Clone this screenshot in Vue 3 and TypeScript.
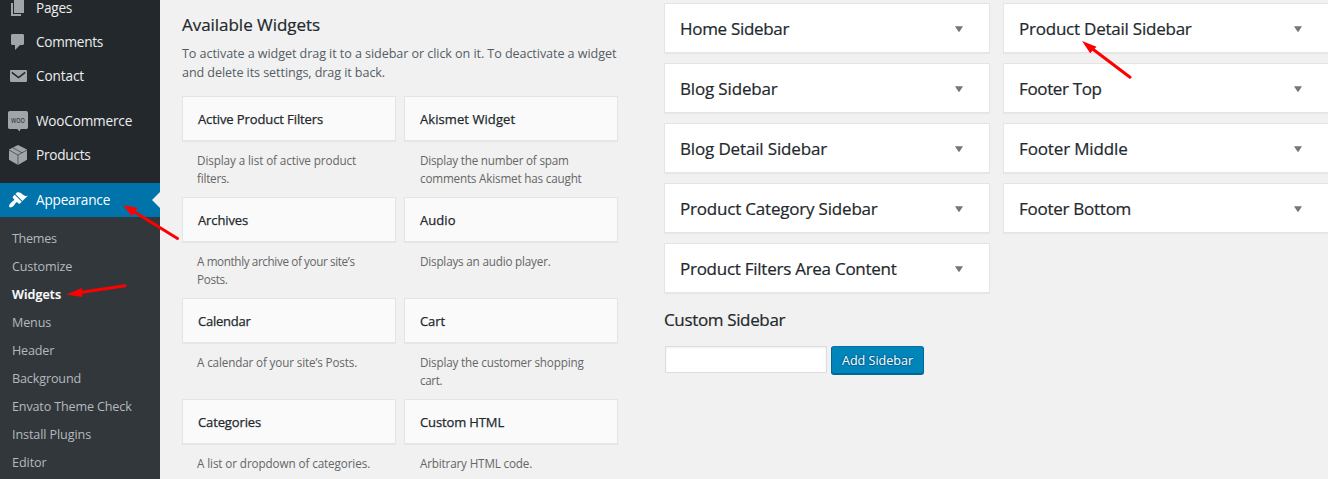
<script setup lang="ts">
interface Label { text: string; w: number }
interface MenuItem extends Label { icon: string; gap?: boolean; active?: boolean }
interface Widget { title: Label; lines: Label[] }

const t = (text: string, w: number): Label => ({ text, w })

// Tightens or loosens tracking so a label occupies its given width.
const vFit = {
  mounted(el: HTMLElement, binding: { value: number }) {
    const apply = () => {
      el.style.letterSpacing = '0px'
      const n = (el.textContent ?? '').length
      el.style.letterSpacing = `${(binding.value - 0.4 - el.getBoundingClientRect().width) / n}px`
    }
    apply()
    document.fonts.ready.then(apply)
  },
}

const menu: MenuItem[] = [
  { text: 'Pages', w: 36.5, icon: 'pages' },
  { text: 'Comments', w: 67.5, icon: 'comments' },
  { text: 'Contact', w: 48.5, icon: 'mail' },
  { text: 'WooCommerce', w: 96.5, icon: 'woo', gap: true },
  { text: 'Products', w: 55, icon: 'box' },
  { text: 'Appearance', w: 74.5, icon: 'brush', gap: true, active: true },
]
const submenu: Label[] = [
  t('Themes', 45), t('Customize', 60.5), t('Widgets', 49.5), t('Menus', 39.5), t('Header', 42.5),
  t('Background', 69.5), t('Envato Theme Check', 120), t('Install Plugins', 79.5), t('Editor', 35),
]
const intro: Label[] = [
  t('To activate a widget drag it to a sidebar or click on it. To deactivate a widget', 434.7),
  t('and delete its settings, drag it back.', 203.5),
]
const widgets: Widget[] = [
  { title: t('Active Product Filters', 125.5), lines: [t('Display a list of active product', 159.5), t('filters.', 32.5)] },
  { title: t('Akismet Widget', 95.5), lines: [t('Display the number of spam', 149), t('comments Akismet has caught', 162)] },
  { title: t('Archives', 50.5), lines: [t('A monthly archive of your site’s', 158), t('Posts.', 31)] },
  { title: t('Audio', 36), lines: [t('Displays an audio player.', 131)] },
  { title: t('Calendar', 53), lines: [t('A calendar of your site’s Posts.', 160.5)] },
  { title: t('Cart', 25.5), lines: [t('Display the customer shopping', 164), t('cart.', 22.5)] },
  { title: t('Categories', 63.5), lines: [t('A list or dropdown of categories.', 173.5)] },
  { title: t('Custom HTML', 84.5), lines: [t('Arbitrary HTML code.', 112.5)] },
]
const areas: Label[][] = [
  [t('Home Sidebar', 109.5), t('Blog Sidebar', 98), t('Blog Detail Sidebar', 147.5), t('Product Category Sidebar', 198), t('Product Filters Area Content', 217)],
  [t('Product Detail Sidebar', 173), t('Footer Top', 83), t('Footer Middle', 109), t('Footer Bottom', 112.5)],
]
</script>

<template>
  <div class="page">
    <nav class="side">
      <a v-for="m in menu" :key="m.text" class="item" :class="{ gap: m.gap, active: m.active }">
        <svg class="icon" viewBox="0 0 20 20">
          <path v-if="m.icon === 'pages'" d="M6 15V2h10v13H6zm-1 1h8v2H3V5h2v11z" />
          <path v-else-if="m.icon === 'comments'" d="M4.500 2h10c.8 0 1.500.7 1.500 1.500v8c0 .8-.7 1.500-1.500 1.500H12l-5 5v-5H4.500C3.700 13 3 12.300 3 11.500v-8C3 2.700 3.700 2 4.500 2z" />
          <template v-else-if="m.icon === 'mail'">
            <rect x="2" y="4" width="17" height="12" rx="1.200" />
            <path class="cut" d="M3.800 6.300l6.700 5.300 6.700-5.300" stroke-width="1.600" />
          </template>
          <template v-else-if="m.icon === 'woo'">
            <path d="M1.800 0h16.400C19.300 0 20 .8 20 1.800v14.400c0 1-.7 1.800-1.800 1.800h-5.600l-.9 2.500L9.200 18H1.800C.8 18 0 17.200 0 16.200V1.800C0 .8.8 0 1.800 0z" />
            <text x="10" y="11.600" text-anchor="middle" textLength="14" lengthAdjust="spacingAndGlyphs">WOO</text>
          </template>
          <template v-else-if="m.icon === 'box'">
            <path d="M10 0l9 4.600v10.200L10 20l-9-5.200V4.600z" />
            <path class="cut" d="M1 5l9 5 9-5M10 10v10M5 2.800l9 5" stroke-width=".6" />
          </template>
          <path v-else d="M14.480 11.060L7.410 3.990l1.500-1.500c.5-.56 2.300-.47 3.510.32 1.210.8 1.430 1.280 2.910 2.100 1.180.64 2.450 1.260 4.450.85zm-.71.71L6.700 4.700 4.930 6.470c-.39.39-.39 1.020 0 1.410l1.060 1.060c.39.39.39 1.030 0 1.420-.6.6-1.430 1.110-2.210 1.690-.35.26-.7.53-1.010.84C1.430 14.230.4 16.080 1.400 17.070c.99 1 2.840-.03 4.180-1.360.31-.31.58-.66.85-1.020.57-.78 1.080-1.610 1.690-2.210.39-.39 1.020-.39 1.410 0l1.060 1.060c.39.39 1.020.39 1.410 0z" />
        </svg>
        <span v-fit="m.w">{{ m.text }}</span>
      </a>
      <div class="sub">
        <a v-for="s in submenu" :key="s.text" :class="{ current: s.text === 'Widgets' }"><span v-fit="s.w">{{ s.text }}</span></a>
      </div>
    </nav>

    <section class="available">
      <h2><span v-fit="138.5">Available Widgets</span></h2>
      <p v-for="l in intro" :key="l.text" class="intro"><span v-fit="l.w">{{ l.text }}</span></p>
      <div class="grid">
        <div v-for="w in widgets" :key="w.title.text" class="widget">
          <h3><span v-fit="w.title.w">{{ w.title.text }}</span></h3>
          <p v-for="l in w.lines" :key="l.text"><span v-fit="l.w">{{ l.text }}</span></p>
        </div>
      </div>
    </section>

    <section class="areas">
      <div v-for="(col, i) in areas" :key="i" class="col">
        <div v-for="a in col" :key="a.text" class="area">
          <span v-fit="a.w">{{ a.text }}</span>
          <svg class="caret" viewBox="0 0 9 6"><path d="M0 0h9L5 6H4z" /></svg>
        </div>
        <template v-if="i === 0">
          <h2 class="custom"><span v-fit="121.5">Custom Sidebar</span></h2>
          <div class="form">
            <input type="text" />
            <button type="button"><span v-fit="71.5">Add Sidebar</span></button>
          </div>
        </template>
      </div>
    </section>

    <svg class="arrows" viewBox="0 0 1328 479">
      <path class="shaft" d="M133 211l44.500 27.500M80 292.500l45-6.800M1092 48.500l38 28.700" />
      <path d="M123.200 205.200l14.300 2.500-5.500 8.600zM66.500 294.600l15.200-6.700.6 9.200zM1082 41l14.500 5.700-6.300 6.500z" />
    </svg>
  </div>
</template>

<style>
html, body { overflow: hidden; }
</style>

<style scoped>
.page {
  position: relative;
  display: flex;
  width: 1328px;
  height: 479px;
  overflow: hidden;
  background: #f1f1f1;
  font-family: "Open Sans", "Noto Sans", sans-serif;
  color: #23282d;
}
.page span { white-space: nowrap; display: inline-block; }
h2, h3, p { margin: 0; }
.side { width: 160px; flex: none; background: #23282d; margin-top: -9px; height: 488px; }
.item {
  position: relative;
  display: flex;
  align-items: center;
  height: 34px;
  padding-left: 8px;
  gap: 8px;
  font-size: 13.6px;
  color: #eee;
}
.item span { margin-bottom: 2px; }
.item.gap { margin-top: 11px; }
.item.active { background: #0073aa; color: #fff; }
.item.active::after {
  content: "";
  position: absolute;
  right: 0;
  top: 9px;
  border: solid transparent;
  border-width: 8px 8px 8px 0;
  border-right-color: #f1f1f1;
}
.icon { width: 20px; height: 20px; fill: #a0a5aa; overflow: visible; flex: none; }
.active .icon { fill: #fff; }
.cut { fill: none; stroke: #23282d; }
.icon text { font: 600 7.5px "Open Sans", sans-serif; fill: #3b4046; }
.sub { background: #32373c; padding-top: 7px; height: 255px; }
.sub a {
  display: flex;
  align-items: center;
  height: 28px;
  padding-left: 12px;
  font-size: 12.6px;
  color: #b4b9be;
}
.sub a.current { color: #fff; font-weight: 600; -webkit-text-stroke: .2px; }
.available { width: 436px; margin-left: 22px; flex: none; padding-top: 13px; }
h2 { font-size: 17px; font-weight: 400; line-height: 24px; -webkit-text-stroke: .2px; }
.intro { font-size: 12.6px; line-height: 19px; color: #555d66; }
.intro:first-of-type { margin-top: 7px; }
.grid { display: grid; grid-template-columns: 214px 214px; column-gap: 8px; grid-auto-rows: 101px; margin-top: 14px; }
.widget h3 {
  box-sizing: border-box;
  height: 45px;
  padding-left: 15px;
  margin-bottom: 10px;
  border: 1px solid #e5e5e5;
  background: #fafafa;
  box-shadow: 0 1px 1px rgba(0, 0, 0, .04);
  font-size: 13px;
  font-weight: 400;
  line-height: 45px;
  -webkit-text-stroke: .25px;
}
.widget p { padding-left: 15px; font-size: 11.7px; line-height: 18px; color: #666; }
.widget:nth-child(even) p { padding-left: 16px; }
.areas { display: flex; gap: 13px; margin-left: 46px; padding-top: 3px; flex: none; }
.col { width: 326px; flex: none; }
.area {
  box-sizing: border-box;
  display: flex;
  align-items: center;
  justify-content: space-between;
  height: 50px;
  margin-bottom: 10px;
  padding: 0 25px 0 15px;
  border: 1px solid #e5e5e5;
  background: #fff;
  box-shadow: 0 1px 1px rgba(0, 0, 0, .04);
  font-size: 17px;
  -webkit-text-stroke: .2px;
}
.caret { width: 8px; height: 6px; margin-top: 2px; margin-right: 1px; fill: #72777c; }
.custom { margin-top: 15px; }
.form { display: flex; gap: 4px; margin: 14px 0 0 1px; }
input {
  box-sizing: border-box;
  width: 162px;
  height: 27px;
  border: 1px solid #ddd;
  background: #fff;
  box-shadow: inset 0 1px 2px rgba(0, 0, 0, .07);
  padding: 0;
}
button {
  box-sizing: border-box;
  width: 93px;
  height: 28px;
  padding: 1px 0 0 10px;
  border: 1px solid;
  border-color: #0073aa #006799 #006799;
  border-radius: 3px;
  background: #0085ba;
  box-shadow: 0 1px 0 #006799;
  color: #fff;
  font: 12.6px/26px "Open Sans", sans-serif;
  text-align: left;
  text-shadow: 0 -1px 1px #006799, 1px 0 1px #006799, 0 1px 1px #006799, -1px 0 1px #006799;
}
.arrows { position: absolute; left: 0; top: 0; width: 1328px; height: 479px; fill: #f00; }
.shaft { fill: none; stroke: #f00; stroke-width: 3; stroke-linecap: round; }
</style>
